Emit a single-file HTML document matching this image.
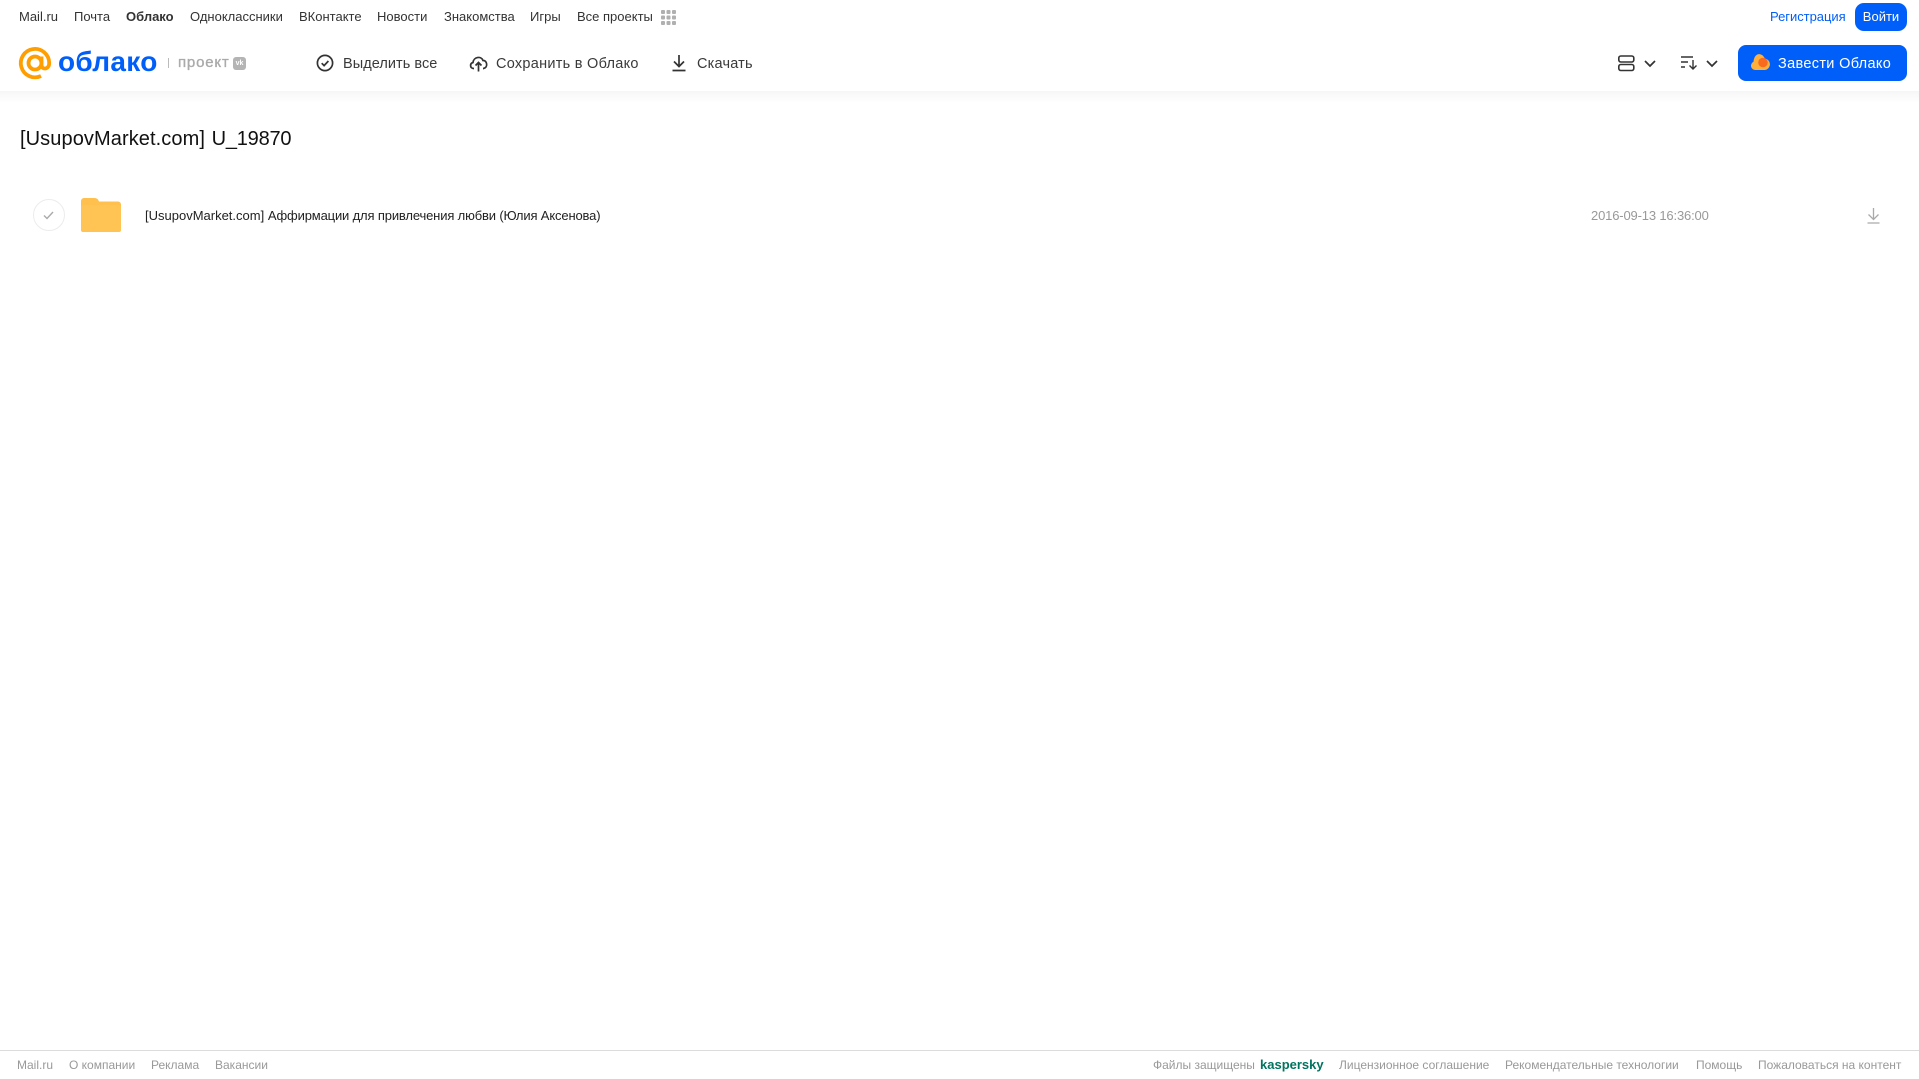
<!DOCTYPE html>
<html lang="ru"><head><meta charset="utf-8"><title>Облако</title>
<style>
html,body{margin:0;padding:0;background:#fff;width:1919px;height:1079px;overflow:hidden}
body{position:relative;font-family:"Liberation Sans",sans-serif}
.t{position:absolute;white-space:nowrap;line-height:20px;height:20px}
.n{top:7px;font-size:13px;color:#333}
.b{top:53.500px;font-size:14.500px;color:#3a3a3a}
.f{top:1055px;font-size:12px;color:#999}
svg{position:absolute;overflow:visible}
</style></head><body>
<div style="position:absolute;left:0;top:0;width:1919px;height:91px;background:#fff;box-shadow:0 2px 10px rgba(0,0,0,.07)"></div>

<span class="t n" style="left:19px">Mail.ru</span>
<span class="t n" style="left:74px">Почта</span>
<span class="t n" style="left:126px;font-weight:bold">Облако</span>
<span class="t n" style="left:190px">Одноклассники</span>
<span class="t n" style="left:299px">ВКонтакте</span>
<span class="t n" style="left:377px">Новости</span>
<span class="t n" style="left:444px">Знакомства</span>
<span class="t n" style="left:530px">Игры</span>
<span class="t n" style="left:577px">Все проекты</span>
<svg style="left:661px;top:10px" width="15" height="15" fill="#b0b0b0"><rect width="4" height="4" rx="1"/><rect x="5.500" width="4" height="4" rx="1"/><rect x="11" width="4" height="4" rx="1"/><rect y="5.500" width="4" height="4" rx="1"/><rect x="5.500" y="5.500" width="4" height="4" rx="1"/><rect x="11" y="5.500" width="4" height="4" rx="1"/><rect y="11" width="4" height="4" rx="1"/><rect x="5.500" y="11" width="4" height="4" rx="1"/><rect x="11" y="11" width="4" height="4" rx="1"/></svg>

<span class="t n" style="left:1770px;color:#005ff9;letter-spacing:-.03px">Регистрация</span>
<div style="position:absolute;left:1855px;top:3px;width:52px;height:28px;border-radius:9px;background:#005ff9;color:#fff;font-size:13px;line-height:27px;text-align:center">Войти</div>

<!-- logo -->
<svg style="left:19px;top:47px" width="33" height="33" viewBox="0 0 33 33" fill="none" stroke="#ff9e00" stroke-width="3.800"><circle cx="16" cy="16" r="6.500"/><path d="M22.500 9.500V18c0 5 7.700 5 7.700-2A14.200 14.200 0 1 0 22 29"/></svg>
<span class="t" style="left:58px;top:47px;height:30px;line-height:30px;font-size:28px;font-weight:bold;color:#005ff9;letter-spacing:.3px">облако</span>
<div style="position:absolute;left:168px;top:58px;width:1px;height:10px;background:#bbb"></div>
<span class="t" style="left:178px;top:53px;font-size:15px;color:#aaa;letter-spacing:.8px;-webkit-text-stroke:.35px #aaa">проект</span>
<div style="position:absolute;left:233px;top:57px;width:13px;height:13px;border-radius:3px;background:#b4b4b4;color:#fff;font-size:7px;line-height:13px;font-weight:bold;text-align:center">vk</div>

<!-- toolbar -->
<svg style="left:316px;top:54px" width="18" height="18" fill="none" stroke="#333" stroke-width="1.700"><circle cx="9" cy="9" r="7.600"/><path d="M5.700 9.200l2.400 2.400 4.300-4.600"/></svg>
<span class="t b" style="left:343px;letter-spacing:.05px">Выделить все</span>
<svg style="left:469px;top:54px" width="19" height="18" fill="none" stroke="#333" stroke-width="1.700"><path d="M5 14.500H4.500C1 14.500.5 9.500 4 8.500 4.500 3 12 1.500 14 6.500c4-.5 5.500 7 .5 8H14"/><path d="M9.500 17.500V9M6.500 11.500l3-3 3 3"/></svg>
<span class="t b" style="left:496px;letter-spacing:.27px">Сохранить в Облако</span>
<svg style="left:672px;top:54px" width="14" height="18" fill="none" stroke="#333" stroke-width="1.700"><path d="M7 1v11M2 7.500l5 5 5-5M.5 16.500h13"/></svg>
<span class="t b" style="left:697px;letter-spacing:.2px">Скачать</span>

<!-- view / sort -->
<svg style="left:1618px;top:55px" width="17" height="17" fill="none" stroke="#333" stroke-width="1.600"><rect x=".8" y="1" width="15" height="6" rx="2"/><rect x=".8" y="9.500" width="15" height="6" rx="2"/></svg>
<svg style="left:1644px;top:60px" width="12" height="7" fill="none" stroke="#333" stroke-width="1.700"><path d="M1 1l5 5 5-5"/></svg>
<svg style="left:1681px;top:55px" width="16" height="16" fill="none" stroke="#333" stroke-width="1.400"><path d="M0 2h12M0 7h7M0 12h4M12 5v9M8.500 10.500l3.500 3.500 3.500-3.500"/></svg>
<svg style="left:1706px;top:60px" width="12" height="7" fill="none" stroke="#333" stroke-width="1.700"><path d="M1 1l5 5 5-5"/></svg>

<div style="position:absolute;left:1738px;top:45px;width:169px;height:36px;border-radius:8px;background:#005ff9"></div>
<svg style="left:1751px;top:54px" width="19" height="16"><path d="M4.500 16a4.300 4.300 0 0 1-2-8.200C3 2 6-.5 9 .2c2.500.5 4 2.300 4.800 4.300A5.800 5.800 0 0 1 14 16z" fill="#ffb03a"/><circle cx="12" cy="8.500" r="4.800" fill="#f96a1e"/></svg>
<span class="t" style="left:1778px;top:53.500px;font-size:14.500px;color:#fff;letter-spacing:.33px">Завести Облако</span>

<!-- body -->
<div style="position:absolute;left:0;top:91px;width:1919px;height:12px;background:linear-gradient(#f6f6f6,#fff)"></div>
<span class="t" style="left:20px;top:127px;height:24px;line-height:24px;font-size:20px;color:#111"><span style="letter-spacing:.09px">[UsupovMarket.com]</span> <span style="letter-spacing:-.2px;margin-left:1px">U_19870</span></span>

<div style="position:absolute;left:33px;top:199px;width:30px;height:30px;border:1px solid #ececec;border-radius:50%"></div>
<svg style="left:43px;top:210px" width="12" height="10" fill="none" stroke="#aaa" stroke-width="1.400"><path d="M1 5.500l3 3 6-6.500"/></svg>
<svg style="left:81px;top:198px" width="40" height="34"><path d="M0 3a3 3 0 0 1 3-3h10c3 0 4 1 5 3.500h19a3 3 0 0 1 3 3V31a3 3 0 0 1-3 3H3a3 3 0 0 1-3-3z" fill="#ffc04d"/><rect y="7" width="40" height="27" rx="2" fill="#ffc453"/></svg>
<span class="t" style="left:145px;top:206px;font-size:13px;color:#222">[UsupovMarket.com] <span style="letter-spacing:-.15px;margin-left:0">Аффирмации для привлечения любви (Юлия Аксенова)</span></span>
<span class="t" style="left:1591px;top:206px;font-size:13px;color:#999;letter-spacing:-.16px">2016-09-13 16:36:00</span>
<svg style="left:1867px;top:207px" width="13" height="17" fill="none" stroke="#aaa" stroke-width="1.300"><path d="M6.500 1v11M1.500 7.500l5 5 5-5M.5 16h12"/></svg>

<!-- footer -->
<div style="position:absolute;left:0;top:1050px;width:1919px;height:1px;background:#dcdcdc"></div>
<span class="t f" style="left:17px">Mail.ru</span>
<span class="t f" style="left:69px">О компании</span>
<span class="t f" style="left:151px">Реклама</span>
<span class="t f" style="left:215px">Вакансии</span>
<span class="t f" style="left:1153px">Файлы защищены</span>
<span class="t f" style="left:1260px;color:#00745f;font-weight:bold;font-size:13px">kaspersky</span>
<span class="t f" style="left:1339px">Лицензионное соглашение</span>
<span class="t f" style="left:1505px">Рекомендательные технологии</span>
<span class="t f" style="left:1696px">Помощь</span>
<span class="t f" style="left:1758px">Пожаловаться на контент</span>
</body></html>
